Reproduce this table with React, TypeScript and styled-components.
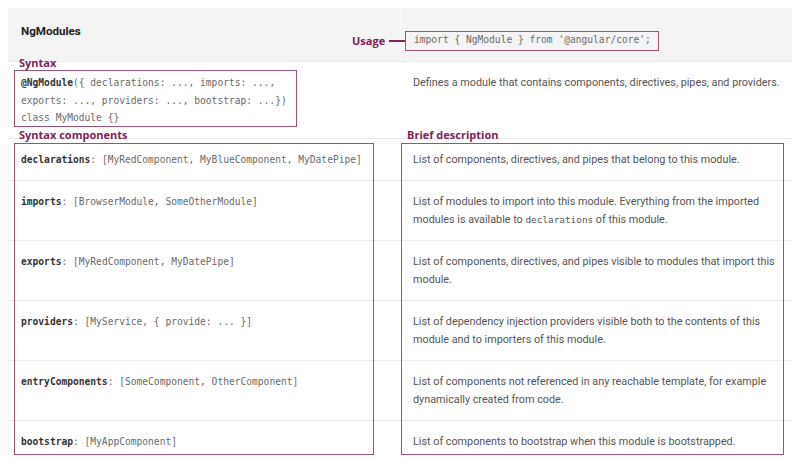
import React from "react";
import styled, { createGlobalStyle } from "styled-components";

const Global = createGlobalStyle`
  body { margin: 8px; background: #ffffff; font-family: Roboto, "Noto Sans", sans-serif; }
`;

const ANNO = "#7e2458";
const FRAME = "#9a5479";

const Card = styled.div`
  position: relative;
  width: 785px;
  background: #fff;
  box-shadow: 0 1px 3px rgba(0, 0, 0, 0.18);
`;

const Row = styled.div<{ $head?: boolean; $last?: boolean }>`
  display: grid;
  grid-template-columns: 392px 1fr;
  background: ${(p) => (p.$head ? "#f4f4f4" : "#fff")};
  border-bottom: ${(p) => (p.$last ? "none" : "1px solid #ebebeb")};
  height: ${(p) => (p.$head ? "53px" : "auto")};
`;

const Cell = styled.div<{ $divider?: boolean; $pt?: number }>`
  padding: ${(p) => p.$pt ?? 12}px 12px 11px 13px;
  border-left: ${(p) => (p.$divider ? "1px solid #fbfbfb" : "none")};
  min-width: 0;
`;

const Title = styled.div`
  font-family: Roboto, sans-serif;
  font-weight: 700;
  font-size: 11.6px;
  line-height: 14px;
  color: #222;
`;

const Code = styled.div<{ $lh?: number }>`
  font-family: "DejaVu Sans Mono", "Liberation Mono", monospace;
  font-size: 9.6px;
  line-height: ${(p) => p.$lh ?? 18}px;
  color: #6a6a6a;
  white-space: pre;
`;

const Key = styled.span`
  font-weight: 700;
  color: #333;
`;

const Line = styled.span`
  display: block;
`;

const Desc = styled.div`
  font-family: Roboto, sans-serif;
  font-size: 10.8px;
  line-height: 18px;
  color: #555;
`;

const InlineCode = styled.code`
  font-family: "DejaVu Sans Mono", "Liberation Mono", monospace;
  font-size: 9.4px;
  color: #555;
`;

const Frame = styled.div<{ $x: number; $y: number; $w: number; $h: number }>`
  position: absolute;
  left: ${(p) => p.$x}px;
  top: ${(p) => p.$y}px;
  width: ${(p) => p.$w}px;
  height: ${(p) => p.$h}px;
  border: 1.5px solid ${FRAME};
  box-sizing: border-box;
  pointer-events: none;
`;

const Label = styled.div<{ $x: number; $y: number }>`
  position: absolute;
  left: ${(p) => p.$x}px;
  top: ${(p) => p.$y}px;
  display: flex;
  align-items: center;
  gap: 4px;
  font-family: "Open Sans", sans-serif;
  font-weight: 700;
  font-size: 11px;
  line-height: 12px;
  color: ${ANNO};
`;

const Dash = styled.span`
  display: block;
  width: 17px;
  height: 1.5px;
  background: ${ANNO};
`;

const rows: { key: string; value: string; desc: React.ReactNode }[] = [
  {
    key: "declarations",
    value: "[MyRedComponent, MyBlueComponent, MyDatePipe]",
    desc: "List of components, directives, and pipes that belong to this module.",
  },
  {
    key: "imports",
    value: "[BrowserModule, SomeOtherModule]",
    desc: (
      <>
        List of modules to import into this module. Everything from the imported
        modules is available to <InlineCode>declarations</InlineCode> of this module.
      </>
    ),
  },
  {
    key: "exports",
    value: "[MyRedComponent, MyDatePipe]",
    desc: "List of components, directives, and pipes visible to modules that import this module.",
  },
  {
    key: "providers",
    value: "[MyService, { provide: ... }]",
    desc: "List of dependency injection providers visible both to the contents of this module and to importers of this module.",
  },
  {
    key: "entryComponents",
    value: "[SomeComponent, OtherComponent]",
    desc: "List of components not referenced in any reachable template, for example dynamically created from code.",
  },
  {
    key: "bootstrap",
    value: "[MyAppComponent]",
    desc: "List of components to bootstrap when this module is bootstrapped.",
  },
];

export default function App() {
  return (
    <>
      <Global />
      <Card>
        <Row $head>
          <Cell $pt={16}>
            <Title>NgModules</Title>
          </Cell>
          <Cell $divider $pt={23}>
            <Code>import {"{"} NgModule {"}"} from '@angular/core';</Code>
          </Cell>
        </Row>
        <Row>
          <Cell>
            <Code $lh={17.5}>
              <Line>
                <Key>@NgModule</Key>({"{"} declarations: ..., imports: ...,
              </Line>
              <Line>exports: ..., providers: ..., bootstrap: ...{"}"})</Line>
              <Line>class MyModule {"{}"}</Line>
            </Code>
          </Cell>
          <Cell>
            <Desc>Defines a module that contains components, directives, pipes, and providers.</Desc>
          </Cell>
        </Row>
        {rows.map((r, i) => (
          <Row key={r.key} $last={i === rows.length - 1}>
            <Cell>
              <Code>
                <Key>{r.key}</Key>: {r.value}
              </Code>
            </Cell>
            <Cell>
              <Desc>{r.desc}</Desc>
            </Cell>
          </Row>
        ))}

        <Label $x={344} $y={27}>
          Usage <Dash />
        </Label>
        <Frame $x={397} $y={23} $w={254} $h={20} />

        <Label $x={11} $y={49}>Syntax</Label>
        <Frame $x={6} $y={62} $w={283} $h={57} />

        <Label $x={11} $y={121}>Syntax components</Label>
        <Frame $x={6} $y={135} $w={360} $h={312} />

        <Label $x={399} $y={121}>Brief description</Label>
        <Frame $x={393} $y={135} $w={383} $h={312} />
      </Card>
    </>
  );
}
